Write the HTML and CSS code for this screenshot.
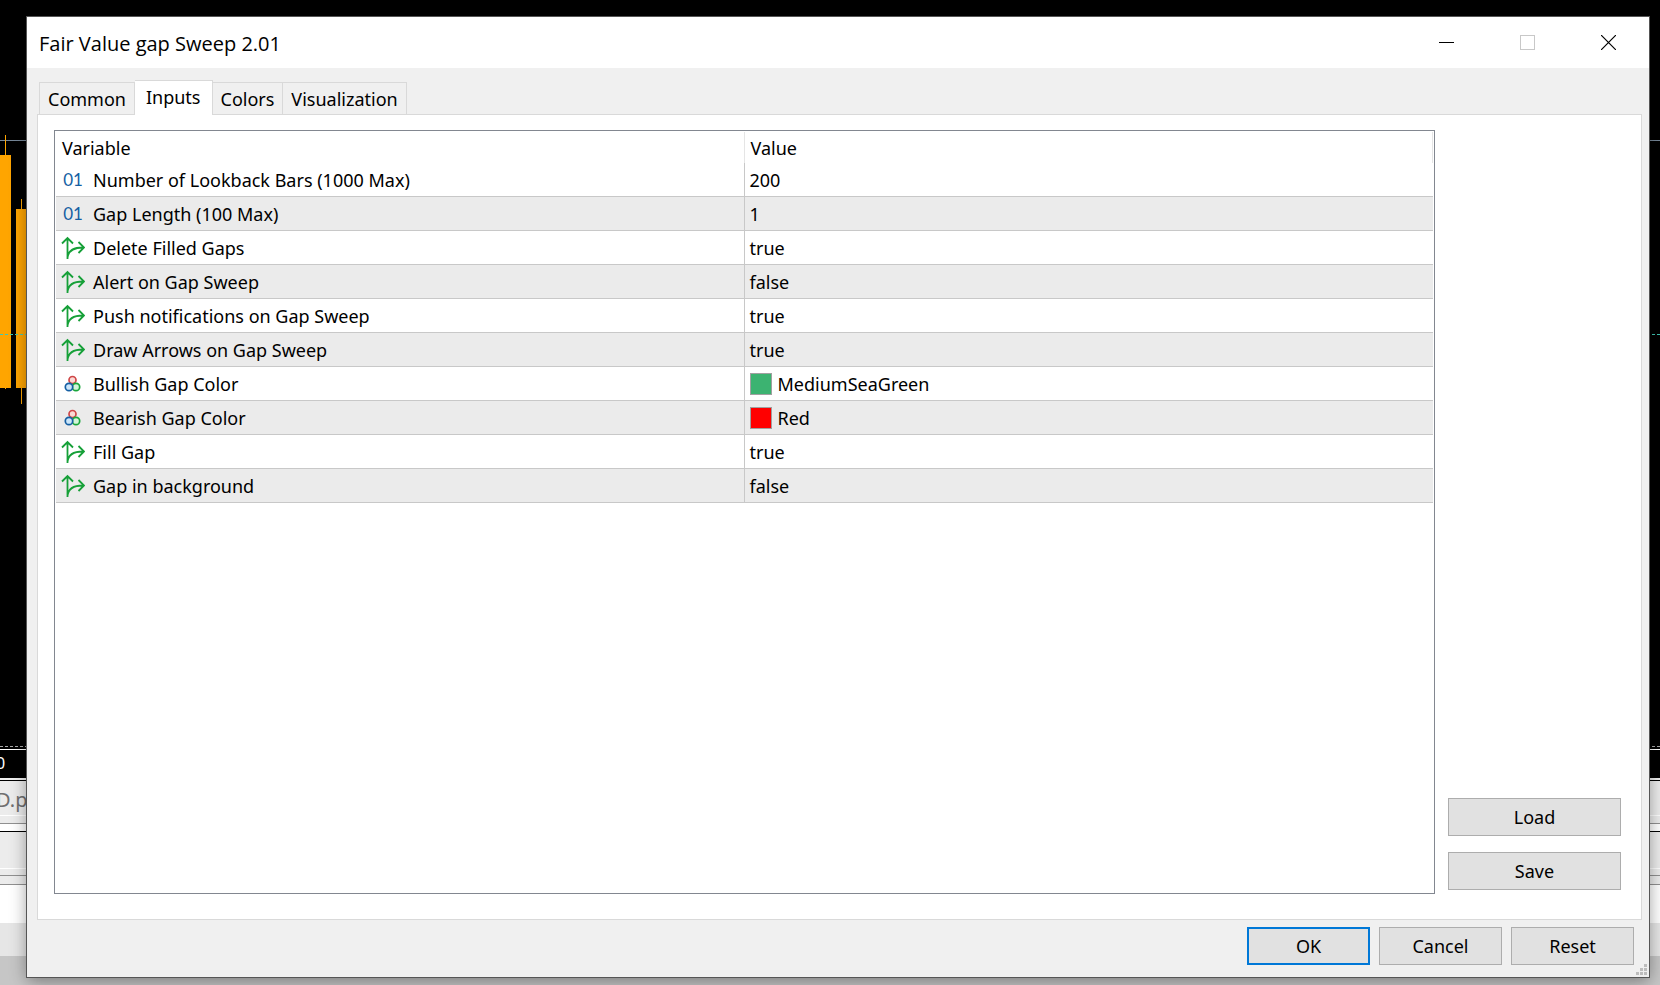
FILE: index.html
```html
<!DOCTYPE html>
<html lang="en">
<head>
  <meta charset="UTF-8">
  <title>Fair Value gap Sweep 2.01</title>
  <link rel="stylesheet" href="styles.css">
</head>
<body>

  <!-- trading terminal behind the dialog -->
  <div class="terminal">
    <div class="chart">
      <span class="level"></span>
      <span class="wick wick-one"></span>
      <span class="candle candle-one"></span>
      <span class="wick wick-two"></span>
      <span class="candle candle-two"></span>
      <span class="price-line"></span>
    </div>
    <div class="time-axis">0</div>
    <div class="chart-tabs">D.p</div>
    <div class="splitter"></div>
    <div class="toolbox"></div>
    <div class="toolbox-gap"></div>
    <div class="toolbox-list"></div>
    <div class="toolbox-tabs"></div>
    <div class="status-bar"></div>
  </div>

  <svg class="symbols" aria-hidden="true">
    <symbol id="bool" viewBox="0 0 24 24">
      <path d="M6.5 23V2M1 7.500L6.500 2L12 7.500M6.500 22C7 15 12 11.500 22 11.500M17.500 6L23 11.500L17.500 17" fill="none" stroke="#16a038" stroke-width="1.800"/>
    </symbol>
    <symbol id="color" viewBox="0 0 24 24">
      <circle cx="11.500" cy="8" r="3.500" fill="#fbd9d5" stroke="#cf4647" stroke-width="1.700"/>
      <circle cx="15" cy="15" r="3.700" fill="#d3f5d8" stroke="#19a63b" stroke-width="1.700"/>
      <circle cx="8" cy="15" r="3.700" fill="#cbe6fa" stroke="#155fa3" stroke-width="1.700"/>
    </symbol>
  </svg>

  <div class="screen">
    <main class="dialog">
      <header class="title-bar">
        <h1>Fair Value gap Sweep 2.01</h1>
        <div class="window-buttons">
          <button type="button" aria-label="Minimize">
            <svg width="15" height="15" viewBox="0 0 15 15" shape-rendering="crispEdges"><path d="M0 7.500H15" stroke="#000"/></svg>
          </button>
          <button type="button" aria-label="Maximize" disabled>
            <svg width="15" height="15" viewBox="0 0 15 15" shape-rendering="crispEdges"><path d="M.5 .5H14.500V14.500H.5Z" fill="none" stroke="#c8c8c8"/></svg>
          </button>
          <button type="button" aria-label="Close">
            <svg width="15" height="15" viewBox="0 0 15 15"><path d="M0 0L15 15M15 0L0 15" stroke="#000" stroke-width="1.200"/></svg>
          </button>
        </div>
      </header>

      <div class="tabs" role="tablist">
        <button type="button" role="tab">Common</button>
        <button type="button" role="tab" class="active" aria-selected="true">Inputs</button>
        <button type="button" role="tab">Colors</button>
        <button type="button" role="tab">Visualization</button>
      </div>

      <section class="panel">
        <div class="list">
          <table class="inputs">
            <thead>
              <tr><th>Variable</th><th>Value</th></tr>
            </thead>
            <tbody>
              <tr>
                <td><div class="cell"><span class="int">01</span>Number of Lookback Bars (1000 Max)</div></td>
                <td>200</td>
              </tr>
              <tr>
                <td><div class="cell"><span class="int">01</span>Gap Length (100 Max)</div></td>
                <td>1</td>
              </tr>
              <tr>
                <td><div class="cell"><svg class="icon"><use href="#bool"/></svg>Delete Filled Gaps</div></td>
                <td>true</td>
              </tr>
              <tr>
                <td><div class="cell"><svg class="icon"><use href="#bool"/></svg>Alert on Gap Sweep</div></td>
                <td>false</td>
              </tr>
              <tr>
                <td><div class="cell"><svg class="icon"><use href="#bool"/></svg>Push notifications on Gap Sweep</div></td>
                <td>true</td>
              </tr>
              <tr>
                <td><div class="cell"><svg class="icon"><use href="#bool"/></svg>Draw Arrows on Gap Sweep</div></td>
                <td>true</td>
              </tr>
              <tr>
                <td><div class="cell"><svg class="icon"><use href="#color"/></svg>Bullish Gap Color</div></td>
                <td><div class="cell"><span class="swatch green"></span>MediumSeaGreen</div></td>
              </tr>
              <tr>
                <td><div class="cell"><svg class="icon"><use href="#color"/></svg>Bearish Gap Color</div></td>
                <td><div class="cell"><span class="swatch red"></span>Red</div></td>
              </tr>
              <tr>
                <td><div class="cell"><svg class="icon"><use href="#bool"/></svg>Fill Gap</div></td>
                <td>true</td>
              </tr>
              <tr>
                <td><div class="cell"><svg class="icon"><use href="#bool"/></svg>Gap in background</div></td>
                <td>false</td>
              </tr>
            </tbody>
          </table>
        </div>
        <div class="side">
          <button type="button" class="btn">Load</button>
          <button type="button" class="btn">Save</button>
        </div>
      </section>

      <footer class="actions">
        <button type="button" class="btn primary">OK</button>
        <button type="button" class="btn">Cancel</button>
        <button type="button" class="btn">Reset</button>
      </footer>

      <svg class="grip" width="11" height="11" viewBox="0 0 11 11" aria-hidden="true">
        <path d="M8 0h3v3h-3zM4 4h3v3h-3zM8 4h3v3h-3zM0 8h3v3h-3zM4 8h3v3h-3zM8 8h3v3h-3z" fill="#bdbdbd"/>
      </svg>
    </main>
  </div>

</body>
</html>
```

FILE: styles.css
```css
* {
  box-sizing: border-box;
}

body {
  margin: 0;
  background: #000;
  color: #000;
  font-family: "Noto Sans", sans-serif;
  font-size: 18px;
  line-height: 26px;
}

button {
  font: inherit;
  color: inherit;
}

.symbols {
  display: none;
}

/* terminal */
.terminal {
  position: absolute;
  inset: 0;
  display: flex;
  flex-direction: column;
  overflow: hidden;
}

.chart {
  position: relative;
  flex: 1;
  border-bottom: 1px dashed #aaa;
}

.chart span {
  position: absolute;
}

.level {
  top: 140px;
  width: 100%;
  height: 1px;
  background: #778899;
}

.price-line {
  top: 334px;
  width: 100%;
  border-top: 1px dashed #40c8b4;
}

.candle,
.wick {
  background: #ffa500;
}

.wick {
  width: 1px;
}

.wick-one {
  left: 5px;
  top: 135px;
  height: 254px;
}

.wick-two {
  left: 21px;
  top: 199px;
  height: 205px;
}

.candle-one {
  left: 0;
  top: 155px;
  width: 11px;
  height: 233px;
}

.candle-two {
  left: 16px;
  top: 209px;
  width: 17px;
  height: 179px;
}

.time-axis {
  height: 29px;
  margin-top: 2px;
  border-top: 1px solid #fff;
  color: #fff;
  font-size: 16px;
  text-indent: -4px;
}

.chart-tabs {
  height: 46px;
  padding-top: 7px;
  border-top: 2px solid #f0f0f0;
  border-bottom: 1px solid #909090;
  background: #ececec;
  box-shadow: inset 0 1px #000, inset 0 -7px #ececec, inset 0 -8px #fff;
  color: #707070;
  font-size: 20px;
  text-indent: -4px;
}

.splitter {
  height: 7px;
  background: #fff;
}

.toolbox {
  height: 45px;
  border-top: 1px solid #000;
  border-bottom: 1px solid #909090;
  background: #ececec;
  box-shadow: inset 0 -6px #ececec, inset 0 -7px #fff;
}

.toolbox-gap {
  height: 9px;
  border-bottom: 1px solid #909090;
  background: #ececec;
}

.toolbox-list {
  height: 38px;
  background: #fff;
}

.toolbox-tabs {
  height: 33px;
  background: #e6e6e6;
}

.status-bar {
  height: 29px;
  background: #c6c6c6;
}

/* dialog */
.screen {
  position: relative;
  display: flex;
  min-height: 100vh;
  padding: 17px 11px 8px 27px;
}

.dialog {
  position: relative;
  flex: 1;
  display: flex;
  flex-direction: column;
  background: #f0f0f0;
  box-shadow: 0 0 0 1px #555, 0 4px 16px rgba(0, 0, 0, 0.4);
}

.title-bar {
  display: flex;
  justify-content: space-between;
  height: 51px;
  padding-left: 12px;
  background: #fff;
}

.title-bar h1 {
  margin: 0;
  font-family: "Open Sans", sans-serif;
  font-size: 20px;
  font-weight: 400;
  line-height: 54px;
}

.window-buttons {
  display: flex;
}

.window-buttons button {
  display: flex;
  align-items: center;
  justify-content: center;
  width: 81px;
  padding: 0;
  border: 0;
  background: none;
}

.tabs {
  display: flex;
  align-items: flex-end;
  height: 46px;
  padding-left: 12px;
}

.tabs button {
  height: 32px;
  padding: 0 8px;
  border: 1px solid #d9d9d9;
  border-bottom: 0;
  border-left: 0;
  background: #f0f0f0;
}

.tabs button:first-child {
  border-left: 1px solid #d9d9d9;
}

.tabs .active {
  position: relative;
  height: 35px;
  padding: 0 11px 3px;
  margin-bottom: -1px;
  background: #fff;
}

.panel {
  flex: 1;
  display: flex;
  gap: 13px;
  margin: 0 7px 0 10px;
  padding: 15px 20px 25px 16px;
  border: 1px solid #d9d9d9;
  background: #fff;
}

.list {
  flex: 1;
  padding: 1px;
  border: 1px solid #828790;
}

.inputs {
  width: 100%;
  border-spacing: 0;
  table-layout: fixed;
}

.inputs th {
  height: 31px;
  padding: 1px 6px;
  border-right: 1px solid #e5e5e5;
  font-weight: 400;
  text-align: left;
}

.inputs td {
  height: 34px;
  padding: 0 5px;
  border-bottom: 1px solid #c8c8c8;
}

.inputs td:first-child {
  border-right: 1px solid #c8c8c8;
}

.inputs tbody tr:nth-child(even) {
  background: #ebebeb;
}

.cell {
  display: flex;
  align-items: center;
  gap: 8px;
}

.icon,
.int {
  width: 24px;
  height: 24px;
}

.int {
  color: #155fa3;
  font-family: Lato, sans-serif;
  font-size: 17px;
  line-height: 24px;
  text-align: center;
}

.swatch {
  width: 22px;
  height: 22px;
  border: 1px solid #a0a0a0;
}

.cell .swatch {
  margin-right: -2px;
}

.green {
  background: #3cb371;
}

.red {
  background: #f00;
}

.side {
  display: flex;
  flex-direction: column;
  justify-content: flex-end;
  gap: 16px;
  width: 173px;
  padding-bottom: 4px;
}

.btn {
  height: 38px;
  padding: 0;
  border: 1px solid #adadad;
  background: #e1e1e1;
}

.actions {
  display: flex;
  justify-content: flex-end;
  gap: 9px;
  padding: 7px 15px 12px;
}

.actions .btn {
  width: 123px;
}

.actions .primary {
  border: 2px solid #0078d7;
}

.grip {
  position: absolute;
  right: 2px;
  bottom: 2px;
}
```
